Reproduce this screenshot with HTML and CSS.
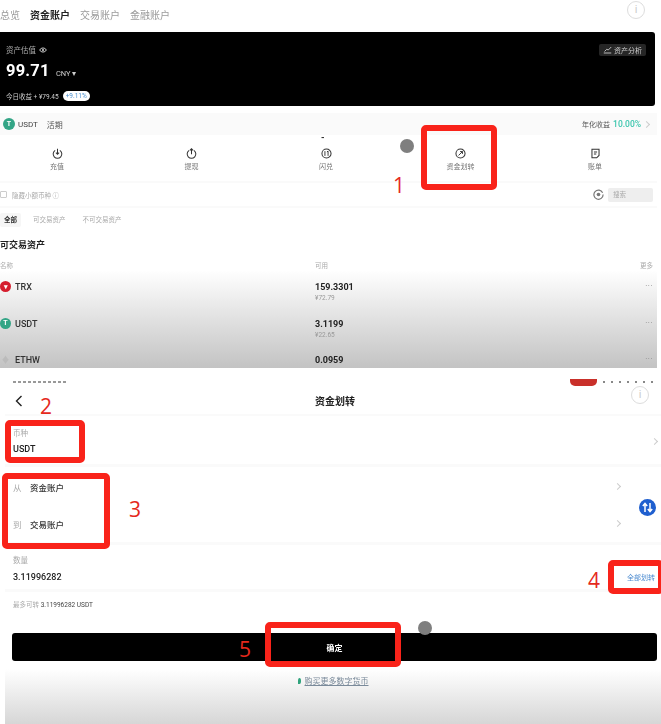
FILE: index.html

```html
<!DOCTYPE html>
<html lang="zh-CN">
<head>
  <meta charset="UTF-8">
  <title>资金划转</title>
  <link rel="stylesheet" href="styles.css">
</head>
<body>
<div class="page">

  <section class="panel assets">
    <nav class="top-tabs">
      <span>总览</span>
      <span class="active">资金账户</span>
      <span>交易账户</span>
      <span>金融账户</span>
    </nav>

    <div class="balance-card">
      <div class="balance-left">
        <div class="balance-label">资产估值
          <svg width="8" height="8" viewBox="0 0 12 12"><path d="M1 6c2-4 8-4 10 0-2 4-8 4-10 0z" fill="none" stroke="#ccc" stroke-width="1.5"/><circle cx="6" cy="6" r="1.6" fill="#ccc"/></svg>
        </div>
        <div class="balance-value">99.71 <small>CNY ▾</small></div>
        <div class="balance-today">今日收益 + ¥79.45 <span class="pill">+9.11%</span></div>
      </div>
      <div class="analysis-btn">
        <svg width="9" height="8" viewBox="0 0 12 10"><path d="M1 9h10M2 7l3-3 2 1 4-4" fill="none" stroke="#ccc" stroke-width="1.2"/></svg>
        资产分析
      </div>
    </div>

    <div class="earn-row">
      <div class="earn-left">
        <span class="coin coin-usdt">T</span>
        <span class="earn-name">USDT</span>
        <span class="earn-tag">活期</span>
      </div>
      <div class="earn-right">年化收益 <b>10.00%</b> <i class="chev"></i></div>
    </div>

    <div class="dash">-</div>

    <div class="actions">
      <div class="action">
        <svg width="11" height="11" viewBox="0 0 14 14"><path d="M4 3a5.5 5.5 0 1 0 6 0M7 1v7M5 6l2 2 2-2" fill="none" stroke="#333" stroke-width="1.3"/></svg>
        <span>充值</span>
      </div>
      <div class="action">
        <svg width="11" height="11" viewBox="0 0 14 14"><path d="M4 3a5.5 5.5 0 1 0 6 0M7 8V1M5 3l2-2 2 2" fill="none" stroke="#333" stroke-width="1.3"/></svg>
        <span>提现</span>
      </div>
      <div class="action">
        <svg width="11" height="11" viewBox="0 0 14 14"><circle cx="7" cy="7" r="5.8" fill="none" stroke="#333" stroke-width="1.3"/><path d="M5 4v6M9 4v6M7.500 5l1.500-1" fill="none" stroke="#333" stroke-width="1.2"/></svg>
        <span>闪兑</span>
      </div>
      <div class="action">
        <svg width="11" height="11" viewBox="0 0 14 14"><circle cx="7" cy="7" r="5.8" fill="none" stroke="#333" stroke-width="1.3"/><path d="M4.500 9.500l5-5M6.500 4.500h3v3" fill="none" stroke="#333" stroke-width="1.2"/></svg>
        <span>资金划转</span>
      </div>
      <div class="action">
        <svg width="11" height="11" viewBox="0 0 14 14"><path d="M2.500 1.500h9v8l-3 3h-6zM5 5h4M5 7.500h3" fill="none" stroke="#333" stroke-width="1.3"/></svg>
        <span>账单</span>
      </div>
    </div>

    <div class="filter-row">
      <label class="hide-small"><i class="check"></i>隐藏小额币种 ⓘ</label>
      <div class="search-wrap">
        <svg width="11" height="11" viewBox="0 0 12 12"><path d="M10.500 4a5 5 0 1 0 .5 2" fill="none" stroke="#777" stroke-width="1.3"/><circle cx="6" cy="6" r="2" fill="#777"/></svg>
        <div class="search">搜索</div>
      </div>
    </div>

    <div class="sub-tabs">
      <span class="active">全部</span>
      <span>可交易资产</span>
      <span>不可交易资产</span>
    </div>

    <h2 class="section-title">可交易资产</h2>

    <div class="table-head">
      <span>名称</span><span>可用</span><span>更多</span>
    </div>
    <div class="asset-row">
      <div class="asset-name"><span class="coin coin-trx">▾</span>TRX</div>
      <div class="asset-amount">159.3301<small>¥72.79</small></div>
      <div class="more">···</div>
    </div>
    <div class="asset-row">
      <div class="asset-name"><span class="coin coin-usdt">T</span>USDT</div>
      <div class="asset-amount">3.1199<small>¥22.65</small></div>
      <div class="more">···</div>
    </div>
    <div class="asset-row">
      <div class="asset-name"><span class="coin coin-eth">♦</span>ETHW</div>
      <div class="asset-amount">0.0959</div>
      <div class="more">···</div>
    </div>
  </section>

  <section class="panel transfer">
    <div class="clip-strip"><i class="clip-text"></i><i class="clip-red"></i><i class="clip-dots"></i></div>

    <header class="transfer-head">
      <svg class="back" width="8" height="12" viewBox="0 0 8 12"><path d="M6.500 1L1.500 6l5 5" fill="none" stroke="#222" stroke-width="1.4"/></svg>
      <h1>资金划转</h1>
    </header>

    <div class="field coin-field">
      <div>
        <div class="field-label">币种</div>
        <div class="field-value">USDT</div>
      </div>
      <i class="chev"></i>
    </div>

    <div class="field accounts">
      <div class="account"><span>从</span><b>资金账户</b><i class="chev"></i></div>
      <div class="account"><span>到</span><b>交易账户</b><i class="chev"></i></div>
      <svg class="swap" width="17" height="17" viewBox="0 0 17 17"><circle cx="8.500" cy="8.500" r="8.500" fill="#1f5fcf"/><path d="M6 13V5M3.800 7L6 4.500 8.200 7M11 4v8M8.800 10l2.200 2.500 2.200-2.500" fill="none" stroke="#fff" stroke-width="1.500"/></svg>
    </div>

    <div class="field amount">
      <div>
        <div class="field-label">数量</div>
        <div class="field-value">3.11996282</div>
      </div>
      <a class="all-link">全部划转</a>
    </div>

    <div class="max-line">最多可转 <span>3.11996282 USDT</span></div>

    <button class="confirm">确定</button>

    <div class="buy-link"><i class="leaf"></i><u>购买更多数字货币</u></div>
  </section>

  <!-- stuff drawn over the screenshot -->
  <div class="info info-1">i</div>
  <div class="info info-2">i</div>
  <i class="dot dot-1"></i>
  <i class="dot dot-2"></i>

  <i class="mark mark-1"></i>
  <i class="mark mark-2"></i>
  <i class="mark mark-3"></i>
  <i class="mark mark-4"></i>
  <i class="mark mark-5"></i>
  <span class="step step-1">1</span>
  <span class="step step-2">2</span>
  <span class="step step-3">3</span>
  <span class="step step-4">4</span>
  <span class="step step-5">5</span>

</div>
</body>
</html>
```

FILE: styles.css

```css
* {
  box-sizing: border-box;
}
body {
  margin: 0;
  background: #fff;
  color: #222;
  font-family: Roboto, "Noto Sans CJK SC", sans-serif;
}
.page {
  position: relative;
  width: 661px;
  height: 724px;
  overflow: hidden;
}
.panel {
  filter: blur(0.6px);
  overflow: hidden;
}

/* top half */
.assets {
  width: 657px;
  height: 368px;
  background: linear-gradient(to bottom, #fff 270px, #c3c3c3 368px);
}
.top-tabs {
  display: flex;
  gap: 10px;
  height: 32px;
  align-items: center;
  font-size: 10px;
  color: #9a9a9a;
  padding-bottom: 3px;
}
.top-tabs .active {
  color: #222;
  font-weight: 700;
}
.balance-card {
  display: flex;
  justify-content: space-between;
  width: 655px;
  height: 74px;
  padding: 12px 9px 6px 6px;
  background: #000;
  border-radius: 0 3px 3px 0;
  color: #fff;
}
.balance-left {
  display: flex;
  flex-direction: column;
}
.balance-label {
  display: flex;
  align-items: center;
  gap: 3px;
  height: 12px;
  font-size: 7.500px;
  color: #aaa;
}
.balance-value {
  height: 26px;
  margin-top: 3px;
  font-size: 16.500px;
  line-height: 26px;
  font-weight: 700;
  letter-spacing: 0.2px;
}
.balance-value small {
  margin-left: 2px;
  font-size: 7.500px;
  font-weight: 400;
  color: #ccc;
  letter-spacing: 0;
}
.balance-today {
  display: flex;
  align-items: center;
  gap: 4px;
  margin-top: 7px;
  font-size: 6.500px;
  color: #ccc;
}
.pill {
  padding: 1px 3px;
  background: #fff;
  border-radius: 5px;
  color: #4a90d0;
  font-size: 6.500px;
}
.analysis-btn {
  display: flex;
  align-items: center;
  gap: 2px;
  height: 12px;
  padding: 0 4px;
  background: #262626;
  border-radius: 2px;
  font-size: 7px;
  color: #ccc;
}
.earn-row {
  display: flex;
  justify-content: space-between;
  align-items: center;
  height: 22px;
  margin-top: 7px;
  padding: 0 8px 0 3px;
  background: #fafafa;
  font-size: 8px;
}
.earn-left {
  display: flex;
  align-items: center;
  gap: 3px;
}
.earn-name {
  font-size: 8px;
  color: #444;
  padding-right: 6px;
}
.earn-tag {
  color: #555;
}
.earn-right {
  display: flex;
  align-items: center;
  gap: 3px;
  color: #555;
  font-size: 7px;
}
.earn-right b {
  font-size: 8.500px;
  font-weight: 500;
  color: #3cc6ae;
}
.coin {
  display: inline-flex;
  align-items: center;
  justify-content: center;
  width: 12px;
  height: 12px;
  border-radius: 50%;
  color: #fff;
  font-size: 7px;
  font-weight: 700;
}
.coin-usdt {
  background: #33a586;
}
.coin-trx {
  background: #d51e2e;
}
.coin-eth {
  color: #bbb;
  font-size: 9px;
}
.chev {
  display: inline-block;
  width: 5px;
  height: 5px;
  border-top: 1px solid #ccc;
  border-right: 1px solid #ccc;
  transform: rotate(45deg);
}
.dash {
  height: 5px;
  padding-left: 321px;
  font-size: 9px;
  line-height: 5px;
  font-weight: 700;
}
.actions {
  display: flex;
  gap: 94.500px;
  height: 43px;
  padding: 8px 0 0 37px;
  border-bottom: 2px solid #fafafa;
}
.action {
  display: flex;
  flex-direction: column;
  align-items: center;
  gap: 2px;
  width: 40px;
  font-size: 7px;
  color: #777;
}
.filter-row {
  display: flex;
  justify-content: space-between;
  align-items: center;
  height: 25px;
  padding-right: 4px;
  border-bottom: 2px solid #fafafa;
}
.hide-small {
  display: flex;
  align-items: center;
  gap: 5px;
  font-size: 6.500px;
  color: #aaa;
}
.check {
  width: 7px;
  height: 7px;
  border: 1px solid #ccc;
  border-radius: 1px;
}
.search-wrap {
  display: flex;
  align-items: center;
  gap: 4px;
}
.search {
  width: 45px;
  height: 14px;
  padding-left: 5px;
  background: #eee;
  border-radius: 2px;
  font-size: 6.500px;
  line-height: 14px;
  color: #aaa;
}
.sub-tabs {
  display: flex;
  gap: 12px;
  height: 14px;
  margin-top: 5px;
  font-size: 6.500px;
  line-height: 14px;
  color: #aaa;
}
.sub-tabs .active {
  width: 21px;
  background: #f6f6f6;
  border-radius: 2px;
  text-align: center;
  color: #333;
  font-weight: 700;
}
.sub-tabs span:last-child {
  margin-left: 5px;
}
.section-title {
  margin: 11px 0 0;
  font-size: 9px;
  line-height: 14px;
  font-weight: 700;
}
.table-head,
.asset-row {
  display: grid;
  grid-template-columns: 315px 1fr auto;
  padding-right: 4px;
}
.table-head {
  margin-top: 8px;
  height: 13px;
  font-size: 6.500px;
  line-height: 13px;
  color: #aaa;
}
.asset-row {
  height: 36.700px;
  padding-top: 8px;
}
.asset-row:nth-child(n) .coin {
  width: 11px;
  height: 11px;
}
.asset-name {
  display: flex;
  align-items: flex-start;
  gap: 4px;
  font-size: 9px;
  line-height: 12px;
  font-weight: 500;
  color: #333;
}
.asset-amount {
  font-size: 9px;
  line-height: 12px;
  font-weight: 700;
}
.asset-amount small {
  display: block;
  margin-top: 1px;
  font-size: 6.500px;
  font-weight: 400;
  line-height: 9px;
  color: #999;
}
.more {
  font-size: 8px;
  line-height: 10px;
  color: #888;
  letter-spacing: 0.5px;
}

/* bottom half */
.transfer {
  position: absolute;
  left: 5px;
  top: 379px;
  width: 656px;
  height: 345px;
  background: linear-gradient(to bottom, #fff 290px, #d6d6d6 345px);
}
.clip-strip {
  position: relative;
  height: 8px;
}
.clip-text {
  position: absolute;
  left: 8px;
  top: 2px;
  width: 54px;
  height: 2px;
  background: repeating-linear-gradient(to right, #999 0 3px, #fff 3px 5px);
}
.clip-red {
  position: absolute;
  left: 565px;
  top: 0;
  width: 27px;
  height: 7px;
  background: #c9302a;
  border-radius: 0 0 5px 5px;
}
.clip-dots {
  position: absolute;
  left: 598px;
  top: 2px;
  width: 52px;
  height: 2px;
  background: repeating-linear-gradient(to right, #888 0 2px, #fff 2px 8px);
}
.transfer-head {
  display: flex;
  align-items: center;
  justify-content: center;
  position: relative;
  height: 29px;
  padding-left: 4px;
  border-bottom: 2px solid #fafafa;
}
.back {
  position: absolute;
  left: 10px;
}
.transfer-head h1 {
  margin: 0;
  font-size: 10px;
  font-weight: 600;
}
.field {
  display: flex;
  justify-content: space-between;
  align-items: center;
  padding: 0 4px 0 8px;
  border-bottom: 3px solid #fafafa;
}
.coin-field {
  height: 51px;
  padding-top: 3px;
}
.field-label {
  font-size: 7.500px;
  line-height: 12px;
  color: #aaa;
}
.field-value {
  margin-top: 3px;
  font-size: 9px;
  line-height: 12px;
  font-weight: 500;
}
.accounts {
  position: relative;
  display: block;
  height: 78px;
  padding-top: 1px;
}
.account {
  display: flex;
  align-items: center;
  height: 37px;
  font-size: 8.500px;
}
.account span {
  width: 17px;
  color: #aaa;
}
.account b {
  font-weight: 500;
  color: #333;
}
.account .chev {
  margin-left: auto;
  margin-right: 37px;
}
.swap {
  position: absolute;
  left: 634px;
  top: 32px;
}
.amount {
  height: 47px;
  padding-right: 6px;
  padding-top: 4px;
}
.amount .field-value {
  margin-top: 4px;
}
.all-link {
  font-size: 7px;
  color: #4a8ad0;
  padding-top: 16px;
}
.max-line {
  height: 26px;
  padding: 9px 0 0 8px;
  font-size: 6.500px;
  line-height: 9px;
  color: #aaa;
}
.max-line span {
  color: #444;
}
.confirm {
  display: block;
  width: 645px;
  height: 28px;
  margin: 15px 0 0 7px;
  background: #000;
  border: 0;
  border-radius: 3px;
  color: #fff;
  font-family: inherit;
  font-size: 8px;
  font-weight: 700;
}
.buy-link {
  display: flex;
  align-items: center;
  justify-content: center;
  gap: 4px;
  margin-top: 14px;
  font-size: 8px;
  color: #7a8a9a;
}
.leaf {
  width: 3px;
  height: 6px;
  background: #2fa37c;
  border-radius: 50% 50% 50% 0;
}

/* overlays */
.info {
  position: absolute;
  width: 18px;
  height: 18px;
  border: 1px solid #ddd;
  border-radius: 50%;
  text-align: center;
  font-size: 11px;
  line-height: 16px;
  color: #ccc;
  background: #fff;
}
.info-1 {
  left: 627px;
  top: 1px;
}
.info-2 {
  left: 631px;
  top: 386px;
}
.dot {
  position: absolute;
  width: 14px;
  height: 14px;
  background: #7f7f7f;
  border-radius: 50%;
}
.dot-1 {
  left: 400px;
  top: 139px;
}
.dot-2 {
  left: 418px;
  top: 621px;
}
.mark {
  position: absolute;
  border: 6px solid #f9231a;
  border-radius: 5px;
}
.mark-1 {
  left: 421px;
  top: 125px;
  width: 76px;
  height: 65px;
}
.mark-2 {
  left: 5px;
  top: 420px;
  width: 80px;
  height: 43px;
}
.mark-3 {
  left: 2px;
  top: 473px;
  width: 108px;
  height: 76px;
}
.mark-4 {
  left: 608px;
  top: 560px;
  width: 56px;
  height: 34px;
}
.mark-5 {
  left: 265px;
  top: 622px;
  width: 136px;
  height: 45px;
}
.step {
  position: absolute;
  font-family: "Open Sans", sans-serif;
  font-size: 21px;
  line-height: 24px;
  color: #e5291c;
}
.step-1 {
  left: 393px;
  top: 173px;
}
.step-2 {
  left: 40px;
  top: 394px;
}
.step-3 {
  left: 129px;
  top: 497px;
}
.step-4 {
  left: 588px;
  top: 568px;
}
.step-5 {
  left: 239px;
  top: 637px;
}
```
